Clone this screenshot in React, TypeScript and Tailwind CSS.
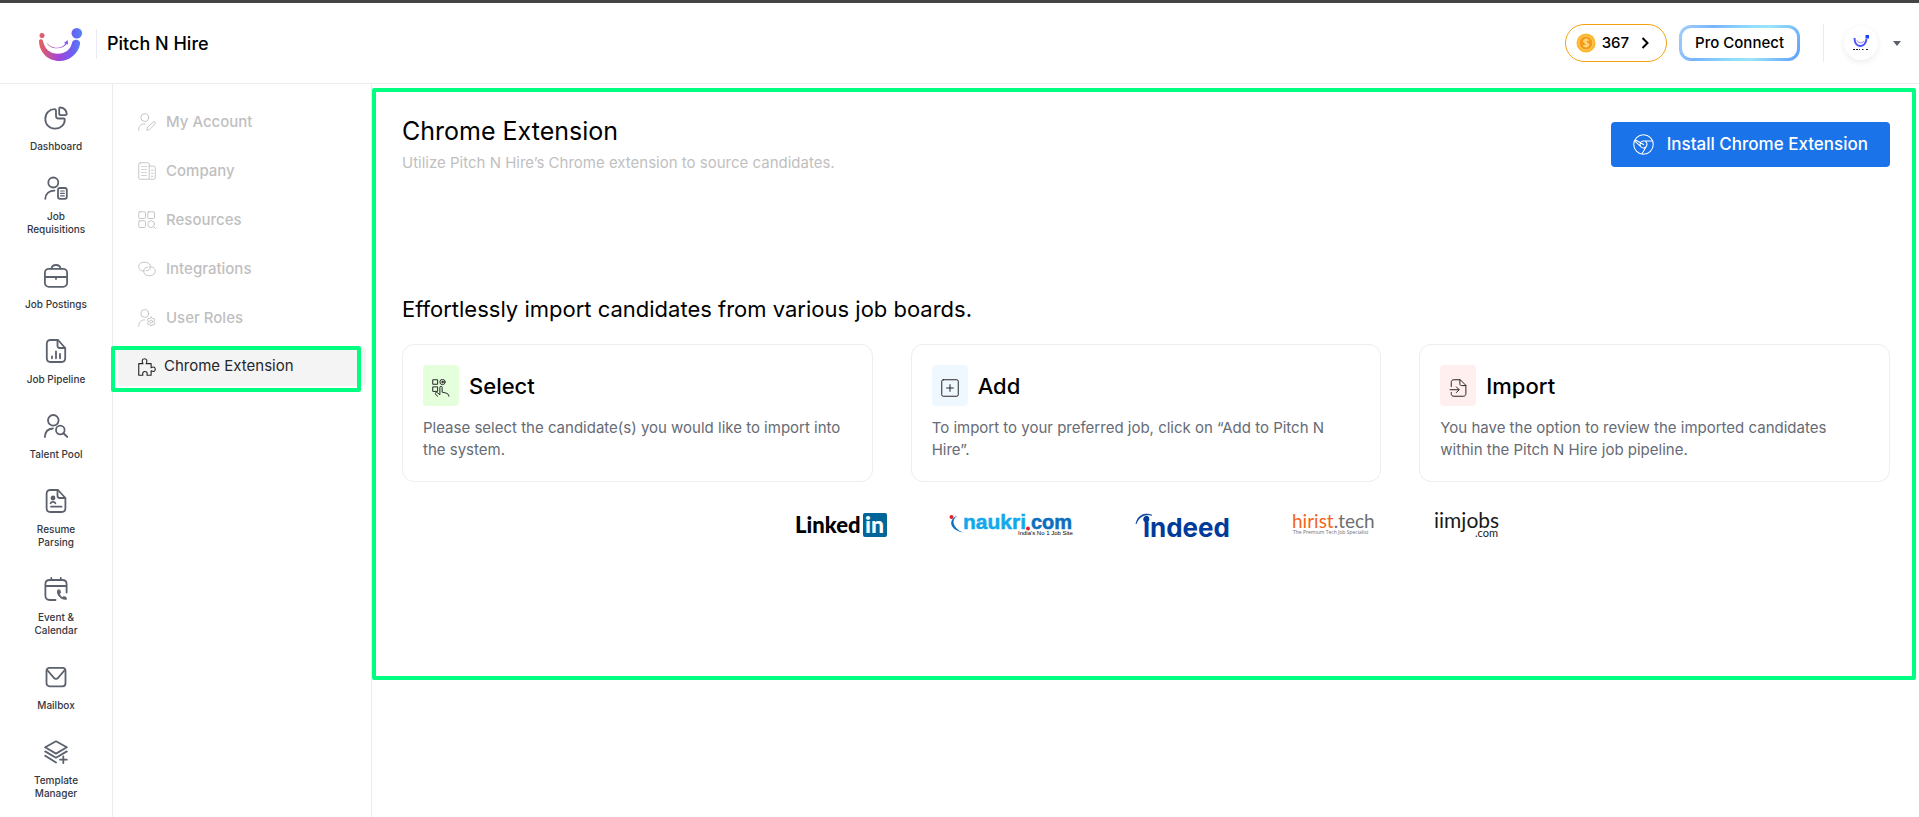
import { ReactNode } from 'react';

const font = "font-['Inter','Liberation_Sans',sans-serif]";

function StrokeIcon({ children, className, width = 1.5 }: { children: ReactNode; className: string; width?: number }) {
  return (
    <svg
      viewBox="0 0 24 24"
      className={className}
      fill="none"
      stroke="currentColor"
      strokeWidth={width}
      strokeLinecap="round"
      strokeLinejoin="round"
      aria-hidden="true"
    >
      {children}
    </svg>
  );
}

const mainNav = [
  {
    label: 'Dashboard',
    icon: (
      <>
        <path d="M10.5 3.2C5.7 3.2 1.3 7 1.3 12.9c0 5.6 4.2 9.8 9.7 9.8 5.5 0 9.8-4 9.8-9.2 0-.7-.3-1-1-1h-5.3c-1.7 0-2.5-.8-2.5-2.5V4.5c0-.9-.4-1.3-1.5-1.3Z" />
        <path d="M15.2 2.8c0-.9.5-1.4 1.4-1.3 3.2.4 5.7 3 6.1 6.2.1.9-.4 1.4-1.3 1.4h-4.5c-1.1 0-1.7-.6-1.7-1.7Z" />
      </>
    ),
  },
  {
    label: 'Job Requisitions',
    icon: (
      <>
        <circle cx="9.3" cy="6.5" r="5" />
        <path d="M1.3 22.8C1.5 17.5 5.5 14.5 10.5 14.6" />
        <rect x="14" y="12" width="8.8" height="10.8" rx="2" />
        <path d="M16.5 15h3.8M16.5 17.4h3.8M16.5 19.8h3.8" strokeWidth="1.2" />
      </>
    ),
  },
  {
    label: 'Job Postings',
    icon: (
      <>
        <rect x="0.9" y="4.8" width="22.2" height="18" rx="4" />
        <path d="M7.5 4.7C7.7 2.2 9.5 1 12 1s4.3 1.2 4.5 3.7M1 13h22M12 13v2" />
      </>
    ),
  },
  {
    label: 'Job Pipeline',
    icon: (
      <>
        <path d="M14 1H6.5C4.2 1 2.8 2.4 2.8 4.7v14.6C2.8 21.6 4.2 23 6.5 23h11c2.3 0 3.7-1.4 3.7-3.7V9L14 1Z" />
        <path d="M13.5 1.2v5.6c0 1.4.8 2.2 2.2 2.2h5.2M8 17.5v1.8M12 12.5v6.8M16 15v4.3" />
      </>
    ),
  },
  {
    label: 'Talent Pool',
    icon: (
      <>
        <circle cx="9.3" cy="6.3" r="5.3" />
        <path d="M.9 23c.2-5 3.1-8.2 8-8.5" />
        <circle cx="16.3" cy="16" r="4.3" />
        <path d="m19.5 19.2 3.7 3.7" strokeWidth="2" />
      </>
    ),
  },
  {
    label: 'Resume Parsing',
    icon: (
      <>
        <path d="M14 1H6.3C4 1 2.6 2.4 2.6 4.7v14.6C2.6 21.6 4 23 6.3 23h11.4c2.3 0 3.7-1.4 3.7-3.7V9L14 1Z" />
        <path d="M13.5 1.2v5.6c0 1.4.8 2.2 2.2 2.2h5.4M7 17.7h10.5" />
        <circle cx="9" cy="9" r="1.5" fill="currentColor" />
        <path d="M6.6 14.2c.6-1.7 4.2-1.7 4.8 0" />
      </>
    ),
  },
  {
    label: 'Event & Calendar',
    icon: (
      <>
        <path d="M11.5 23H5.7c-2.6 0-4.3-1.5-4.3-4.2V7.2C1.4 4.6 3.1 3 5.7 3h12.6c2.6 0 4.3 1.6 4.3 4.2v8.3M1.5 9h21M7.3 1v2M16.8 1v2" />
        <path d="M13.6 13.5c-.9 4.5 3.2 9.3 8.8 8.7l-.5-2-2.4-.5-1.2.9c-1.6-.9-2.5-2.2-2.8-3.9l1-1-.6-2.5Z" fill="currentColor" strokeWidth="1" />
      </>
    ),
  },
  {
    label: 'Mailbox',
    icon: (
      <>
        <rect x="2.5" y="2.8" width="19" height="18.5" rx="3" />
        <path d="m3.2 5 6.7 7.8c1.3 1.5 2.9 1.5 4.2 0L20.8 5" />
      </>
    ),
  },
  {
    label: 'Template Manager',
    icon: (
      <>
        <path d="m12 1.3 10.8 6L12 13.6 1.2 7.3 12 1.3Z" />
        <path d="M1.2 11.4 12 17.7l10.8-6.3M1.2 15.8 12 22.5M19.3 16.5v6.5M16 19.7h6.8" />
      </>
    ),
  },
];

const settingsNav = [
  {
    label: 'My Account',
    icon: (
      <>
        <circle cx="9" cy="6" r="5.2" />
        <path d="M1 23c0-5.5 2.5-8.5 8-8.5M12.5 19.5l7.6-7.3c1.8-1.6 4.2.8 2.6 2.6l-7.5 7.5-3.5.7.8-3.5Z" />
      </>
    ),
  },
  {
    label: 'Company',
    icon: (
      <>
        <rect x="1" y="1" width="14" height="22" rx="2" />
        <path d="M15 5.5h6a2 2 0 0 1 2 2V21a2 2 0 0 1-2 2h-6" />
        <path d="M5 6h2M9 6h2M5 10h2M9 10h2M5 14h2M9 14h2M5 18h2M9 18h2M18 11h2M18 15h2M18 19h2" />
      </>
    ),
  },
  {
    label: 'Resources',
    icon: (
      <>
        <rect x="1" y="1" width="9" height="9" rx="1.5" />
        <rect x="13" y="1" width="9" height="9" rx="1.5" />
        <rect x="1" y="13" width="9" height="9" rx="1.5" />
        <circle cx="17.5" cy="17.5" r="4.5" />
        <path d="m21 21 2.3 2.3" />
      </>
    ),
  },
  {
    label: 'Integrations',
    icon: (
      <>
        <path d="M8.5 14.5C4 15.5 1 12.5 1 9c0-3.8 2.8-6 6.5-6H10c3.7 0 6.5 2.5 6.5 6 0 3-2.2 5.2-5.5 5.2" />
        <path d="M15.5 9.3c4.5-.8 7.5 2 7.5 5.5 0 3.8-2.8 6-6.5 6H14c-3.7 0-6.5-2.5-6.5-6 0-3 2.2-5.3 5.5-5.3" />
      </>
    ),
  },
  {
    label: 'User Roles',
    icon: (
      <>
        <circle cx="9" cy="6" r="5.2" />
        <path d="M1 23c0-5.5 2.5-8.5 8-8.5" />
        <path d="m17.5 10.8 1.5 2 2.4-.3 1 2.2-1.4 2.1 1.4 2.1-1 2.2-2.4-.3-1.5 2-1.5-2-2.4.3-1-2.2 1.4-2.1-1.4-2.1 1-2.2 2.4.3 1.5-2Z" />
        <circle cx="17.5" cy="16.8" r="2" />
      </>
    ),
  },
];

const steps = [
  {
    title: 'Select',
    text: 'Please select the candidate(s) you would like to import into the system.',
    tint: 'bg-[#e5ffdd]',
    icon: (
      <>
        <rect x="1.5" y="1" width="6" height="6" />
        <rect x="1.5" y="10.5" width="6" height="6" />
        <circle cx="14" cy="4" r="3.5" />
        <circle cx="14" cy="4" r="1" fill="currentColor" />
        <path d="M7.5 23c-1.5-1-3-2.5-3-3.8 0-1.5 1.8-1.8 2.8-.8l3.2 2.6V11c0-1.6 3-1.6 3 0v6.5l5 1.2c2.5.7 4 1.8 4 4.3" />
      </>
    ),
  },
  {
    title: 'Add',
    text: 'To import to your preferred job, click on “Add to Pitch N Hire”.',
    tint: 'bg-[#eff7ff]',
    icon: (
      <>
        <rect x="1" y="1" width="22" height="22" rx="2" />
        <path d="M12 7.5v9M7.5 12h9" />
      </>
    ),
  },
  {
    title: 'Import',
    text: 'You have the option to review the imported candidates within the Pitch N Hire job pipeline.',
    tint: 'bg-[#ffefef]',
    icon: (
      <>
        <path d="M3 10V4.5C3 2.3 4.3 1 6.5 1H15l7.5 7.5v11c0 2.2-1.3 3.5-3.5 3.5H6.5C4.3 23 3 21.7 3 19.5V18" />
        <path d="M14.5 1v5.5c0 1.5.8 2.3 2.3 2.3h5.5M1.5 14.3H13M9.8 10.5l3.8 3.8-3.8 3.8" />
      </>
    ),
  },
];

export default function App() {
  return (
    <div className={`flex min-h-screen flex-col bg-white text-black ${font}`}>
      <Header />
      <div className="flex flex-1 items-stretch">
        <MainNav />
        <SettingsNav />
        <main className="min-w-0 flex-1 pt-1 pr-[3px]">
          <ExtensionPage />
        </main>
      </div>
    </div>
  );
}

function Header() {
  return (
    <header className="flex h-[84px] items-center justify-between border-t-3 border-b border-t-[#444444] border-b-[#ebebf0] pr-[18px] pl-[38px]">
      <div className="flex items-center pt-0.5">
        <BrandLogo />
        <span className="mr-2.5 ml-3 h-[30px] w-px bg-[#ebebf5]" />
        <span className="text-[18px] leading-6 font-medium">Pitch N Hire</span>
      </div>
      <div className="flex items-center">
        <button className="flex h-[38px] items-center rounded-full border border-[#f5a210] pr-[17px] pl-2.5 text-[15px] font-medium">
          <Coin />
          <span className="ml-1.5">367</span>
          <svg viewBox="0 0 8 12" className="ml-3 h-3 w-2" fill="none" stroke="currentColor" strokeWidth="2" aria-hidden="true">
            <path d="m1.5 1 5 5-5 5" />
          </svg>
        </button>
        <button className="ml-3 rounded-xl bg-linear-[120deg,#a5d0fb,#79b4fb_25%,#8edcfd_50%,#9be4f8_65%,#5b9dfb] p-[3px] text-[15px] font-medium">
          <span className="flex h-[30px] items-center rounded-[9px] bg-white px-[13px]">Pro Connect</span>
        </button>
        <span className="mx-[23px] h-[38px] w-px bg-[#ebebeb]" />
        <button className="flex items-center" aria-label="Account menu">
          <span className="mr-[15px] ml-[-3px] flex h-[34px] w-[34px] items-center justify-center rounded-full bg-white shadow-[0_2px_6px_rgba(0,0,0,0.08)]">
            <svg viewBox="0 0 18 18" className="h-[18px] w-[18px]" aria-hidden="true">
              <path d="M2.5 4c0 10 10.5 11 12 1" fill="none" stroke="#5056f5" strokeWidth="2" />
              <path d="M5 6.5c1.5 3 5.5 3 7 .5" fill="none" stroke="#8a6cf5" strokeWidth="1" />
              <rect x="13.5" y="1" width="3.5" height="3.5" fill="#1745ff" />
              <path d="M1 15.5h7M10 15.5h1.5M14 15.5h3" stroke="#222" strokeWidth="1.2" strokeDasharray="2 1" />
            </svg>
          </span>
          <svg viewBox="0 0 8 5" className="h-[5px] w-2" fill="#5b616b" aria-hidden="true">
            <path d="M0 0h8L4 5Z" />
          </svg>
        </button>
      </div>
    </header>
  );
}

function BrandLogo() {
  return (
    <svg viewBox="0 0 46 36" className="h-9 w-[46px]" role="img" aria-label="Pitch N Hire">
      <defs>
        <linearGradient id="brand" gradientUnits="userSpaceOnUse" x1="1" y1="8" x2="44" y2="8">
          <stop offset="0" stopColor="#e8605c" />
          <stop offset="0.45" stopColor="#a445d8" />
          <stop offset="0.8" stopColor="#6a62f5" />
          <stop offset="1" stopColor="#4f86f0" />
        </linearGradient>
      </defs>
      <g fill="url(#brand)">
        <circle cx="4" cy="9.5" r="2.5" />
        <circle cx="38.8" cy="7.3" r="5.3" />
        <path d="M1 14.5c1-1.7 3.5-1.5 4 .5C6.5 23 12 27.8 20 27.8c7 0 12.5-4 14-11 .8-4.8 9-3.8 8 1.2C40.5 27.5 31.5 35 21.500 35 9.500 35 1 26 1 14.500Z" />
        <path d="M8.5 16c3 6 14 8.5 19 1.5l-1.5-.5 3.7-3 .3 4.7-1.3-.6C24 24.5 10.5 23.5 8.5 16Z" />
      </g>
    </svg>
  );
}

function Coin() {
  return (
    <svg viewBox="0 0 20 20" className="h-5 w-5" aria-hidden="true">
      <circle cx="10" cy="10" r="9.5" fill="#fbb62b" />
      <circle cx="10" cy="10" r="7" fill="#f59a1d" stroke="#fdd362" strokeWidth="1" />
      <path d="M12.5 7.5c-.8-1.200-4.700-1.300-4.700.7 0 2.300 4.700 1.200 4.700 3.600 0 2-4.200 1.900-5 .5M10 5.500v9" fill="none" stroke="#ffe08a" strokeWidth="1.4" />
    </svg>
  );
}

function MainNav() {
  return (
    <nav className="w-[113px] shrink-0 border-r border-[#ebebf0] pt-[22px]" aria-label="Main">
      {mainNav.map((item, i) => (
        <a
          key={item.label}
          href="#"
          className={`flex flex-col items-center px-5 text-center text-[10px] leading-[13px] font-medium text-[#33373f] ${i === 0 ? 'pb-[23px]' : 'pb-7'}`}
        >
          <StrokeIcon className="mb-2.5 h-6 w-6 text-[#5b616d]" width={1.8}>
            {item.icon}
          </StrokeIcon>
          <span>{item.label}</span>
        </a>
      ))}
    </nav>
  );
}

function SettingsNav() {
  return (
    <nav className="flex w-[259px] shrink-0 flex-col gap-[9px] border-r border-[#ebebf0] px-[5px] py-[18px]" aria-label="Settings">
      {settingsNav.map(item => (
        <a key={item.label} href="#" className="flex h-10 items-center gap-2.5 pl-5 text-[15px] font-medium text-[#bfbfbf]">
          <StrokeIcon className="h-5 w-[18px]" width={1.2}>
            {item.icon}
          </StrokeIcon>
          {item.label}
        </a>
      ))}
      <a href="#" aria-current="page" className="relative flex h-[39px] items-center gap-2 rounded bg-[#f4f4f4] pl-5 text-[15px] text-[#26282c]">
        <StrokeIcon className="h-5 w-[18px]">
          <path d="M1 7.5h5.5C4.5 3.5 6 1 8.7 1s4.2 2.5 2.3 6.500h6.500V13c3.500-2 5.500-.5 5.500 2s-2 4-5.500 2v6H12c1-3.500-.5-5-2.700-5s-3.800 1.500-2.800 5H1V7.500Z" />
        </StrokeIcon>
        Chrome Extension
        <span className="pointer-events-none absolute -top-px right-[5px] -bottom-1.5 -left-[7px] rounded-xs border-4 border-[#00ff80]" />
      </a>
    </nav>
  );
}

function ExtensionPage() {
  return (
    <section className="rounded-xs border-4 border-[#00ff80] pt-[23px] pr-[22px] pb-[138px] pl-[26px]">
      <div className="flex items-start justify-between">
        <div>
          <h1 className="text-[25px] leading-8">Chrome Extension</h1>
          <p className="mt-1 text-[15px] leading-6 text-[#bfbfbf]">Utilize Pitch N Hire’s Chrome extension to source candidates.</p>
        </div>
        <button className="mt-[7px] flex h-[45px] items-center gap-[13px] rounded bg-[#1a73e8] px-[22px] text-[17px] font-medium text-white">
          <ChromeIcon />
          Install Chrome Extension
        </button>
      </div>

      <h2 className="mt-[118px] text-[22px] leading-8">Effortlessly import candidates from various job boards.</h2>

      <div className="mt-[19px] grid grid-cols-3 gap-[38px]">
        {steps.map(step => (
          <div key={step.title} className="rounded-xl border border-[#ededf2] px-5 pt-5 pb-5">
            <div className="flex items-center gap-2.5">
              <span className={`flex h-[41px] w-9 items-center justify-center rounded ${step.tint}`}>
                <StrokeIcon className="mt-1 h-[18px] w-[18px] text-[#222]" width={1.3}>
                  {step.icon}
                </StrokeIcon>
              </span>
              <h3 className="text-[22px] leading-8 font-medium">{step.title}</h3>
            </div>
            <p className="mt-[11px] text-[15px] leading-[22px] text-[#666b75]">{step.text}</p>
          </div>
        ))}
      </div>

      <JobBoards />
    </section>
  );
}

function ChromeIcon() {
  return (
    <svg viewBox="0 0 20 20" className="h-[21px] w-[21px]" fill="none" stroke="currentColor" aria-hidden="true">
      <circle cx="10" cy="10" r="9.3" />
      <path d="M18.600 6.700H9.500A3.300 3.300 0 1 0 12.900 11.500L8.500 19M12.900 11.500c.6-1.200.5-3.200-1-4.400M1.500 6.500l5.700 5.200M2 5.500l8.500 4.700" />
    </svg>
  );
}

function JobBoards() {
  return (
    <div className="mt-[30px] flex items-center justify-center gap-[62px]">
      <svg viewBox="0 0 92 26" className="h-[26px] w-[92px] overflow-visible" role="img" aria-label="LinkedIn">
        <text x="0" y="21" fontSize="22" fontWeight="900" fontFamily="Lato, sans-serif">Linked</text>
        <rect x="68" y="1" width="24" height="24" rx="2" fill="#006699" />
        <text x="70" y="21" fontSize="23" fontWeight="900" fontFamily="Lato, sans-serif" fill="#fff">in</text>
      </svg>
      <svg viewBox="0 0 125 26" className="h-[26px] w-[125px] overflow-visible" role="img" aria-label="naukri.com, India's No 1 Job Site">
        <circle cx="2.5" cy="5" r="2" fill="#e3202b" />
        <path d="M8 4C2 8 3.5 16 14 20.5 5 19 0 13 3 8c1-2 3-3.500 5-4Z" fill="#0a6fbe" />
        <g fontFamily="'Liberation Sans', sans-serif" fontWeight="700">
          <text x="14" y="17" fontSize="21" fill="#12a8ec" stroke="#12a8ec" strokeWidth="0.5">naukri</text>
          <text x="82" y="17" fontSize="20" fill="#0a6fbe" stroke="#0a6fbe" strokeWidth="0.5">com</text>
        </g>
        <circle cx="79" cy="16.5" r="2" fill="#e3202b" />
        <text x="69" y="23" fontSize="6" fontFamily="'Liberation Sans', sans-serif" fill="#000">India's No 1 Job Site</text>
      </svg>
      <svg viewBox="0 0 94 26" className="h-[26px] w-[94px] overflow-visible" role="img" aria-label="indeed">
        <path d="M0 12C1.5 3 9 .2 16 3.3 9 1.8 3.5 4 0 12Z" fill="#003a9b" stroke="#003a9b" strokeWidth="0.6" />
        <circle cx="10.3" cy="7.3" r="3" fill="#003a9b" />
        <text x="7" y="25" fontSize="26" fontWeight="700" fontFamily="Inter, sans-serif" fill="#003a9b">indeed</text>
      </svg>
      <svg viewBox="0 0 80 26" className="h-[26px] w-20 overflow-visible" role="img" aria-label="hirist.tech, The Premium Tech Job Specialist">
        <text x="0" y="16" fontSize="19" fontFamily="Lato, sans-serif" fill="#f26522">
          hirist<tspan fill="#6d6e71">.tech</tspan>
        </text>
        <text x="1" y="22" fontSize="5" fontFamily="'Open Sans', sans-serif" fill="#6d6e71">The Premium Tech Job Specialist</text>
      </svg>
      <svg viewBox="0 0 64 26" className="h-[26px] w-16 overflow-visible" role="img" aria-label="iimjobs.com">
        <text x="0" y="16" fontSize="21" fontFamily="Lato, sans-serif" fill="#1a1a1a">iimjobs</text>
        <text x="41" y="25" fontSize="11" fontFamily="Lato, sans-serif" fill="#1a1a1a">.com</text>
      </svg>
    </div>
  );
}
